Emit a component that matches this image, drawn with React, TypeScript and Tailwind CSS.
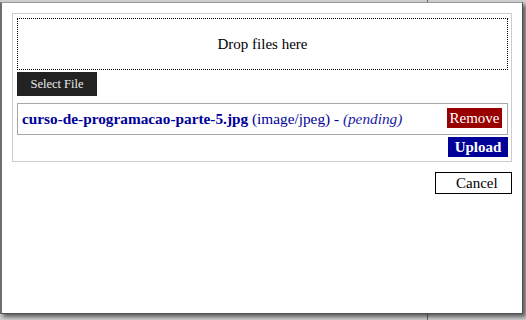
import React from "react";

export default function App() {
  return (
    <div className="relative w-[526px] h-[320px] overflow-hidden bg-[#cfcfcf] font-['Liberation_Serif','Times_New_Roman',serif]">
      <div className="absolute left-[427px] top-0 bottom-0 w-px bg-[#6a6a6a]" />
      <div className="relative mt-[2px] w-[523px] h-[312px] bg-white border-l-2 border-l-[#6e6e6e] border-t border-t-[#9a9a9a] border-r border-r-[#505050] border-b border-b-[#505050] shadow-[3px_3px_4px_rgba(0,0,0,0.55)] px-[10px] pt-[10px]">
        <div className="border border-[#cccccc] pl-[4px] pr-[3px] pt-[4px] pb-[4px] flex flex-col">
          <div className="h-[52px] border border-dotted border-black flex items-center justify-center text-[15px] text-black">
            Drop files here
          </div>
          <div className="mt-[2px] w-[80px] h-[24px] bg-[#222222] text-[#e8e8e8] text-[12.5px] flex items-center justify-center">
            Select File
          </div>
          <div className="mt-[7px] h-[32px] border border-[#a8a8a8] flex items-start justify-between pl-[4px] pr-[5px]">
            <div className="h-full flex items-center text-[15.3px] text-[#000099] whitespace-pre">
              <span className="font-bold">curso-de-programacao-parte-5.jpg</span>
              <span> (image/jpeg) - </span>
              <span className="italic text-[#1a1aa8]">(pending)</span>
            </div>
            <div className="mt-[4px] w-[55px] h-[20px] bg-[#990000] text-white text-[15px] flex items-center justify-center">
              Remove
            </div>
          </div>
          <div className="mt-[2px] self-end w-[60px] h-[20px] bg-[#000099] text-white font-bold text-[15px] flex items-center justify-center">
            Upload
          </div>
        </div>
        <div className="mt-[10px] flex justify-end">
          <div className="w-[77px] h-[22px] border border-black bg-white text-black text-[15px] flex items-center pl-[20px]">
            Cancel
          </div>
        </div>
      </div>
    </div>
  );
}
